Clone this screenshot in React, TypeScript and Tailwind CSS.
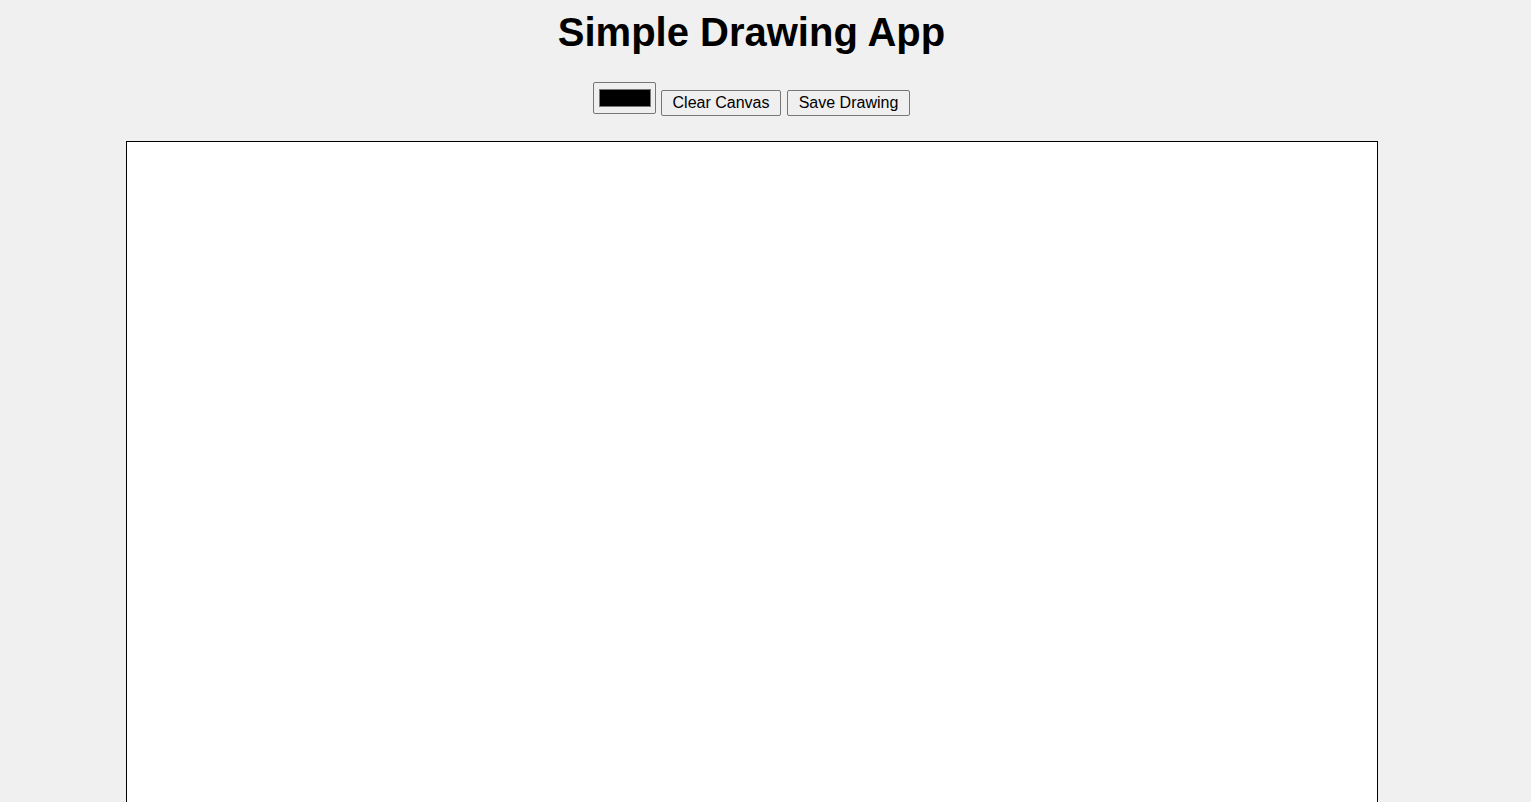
export default function App() {
  return (
    <div className="min-h-[802px] w-full bg-[#f0f0f0] font-['Liberation_Sans',Arial,sans-serif] text-black">
      <div className="flex w-[1503px] flex-col items-center">
        <h1 className="mt-[9px] h-[46px] text-[40px] font-bold leading-[46px]">Simple Drawing App</h1>

        {/* controls */}
        <div className="mt-[27px] flex h-[34px] items-end">
          <div className="mb-[2px] flex h-[32px] w-[63px] items-center justify-center rounded-[2px] border border-[#767676] bg-[#efefef]">
            <div className="h-[18px] w-[52px] border border-[#777] bg-black" />
          </div>
          <button className="ml-[5px] h-[26px] w-[120px] rounded-[2px] border border-[#767676] bg-[#efefef] text-[16px] leading-none">
            Clear Canvas
          </button>
          <button className="ml-[6px] h-[26px] w-[123px] rounded-[2px] border border-[#767676] bg-[#efefef] text-[16px] leading-none">
            Save Drawing
          </button>
        </div>

        {/* canvas */}
        <div className="mt-[25px] h-[700px] w-[1252px] border border-black bg-white" />
      </div>
    </div>
  )
}
